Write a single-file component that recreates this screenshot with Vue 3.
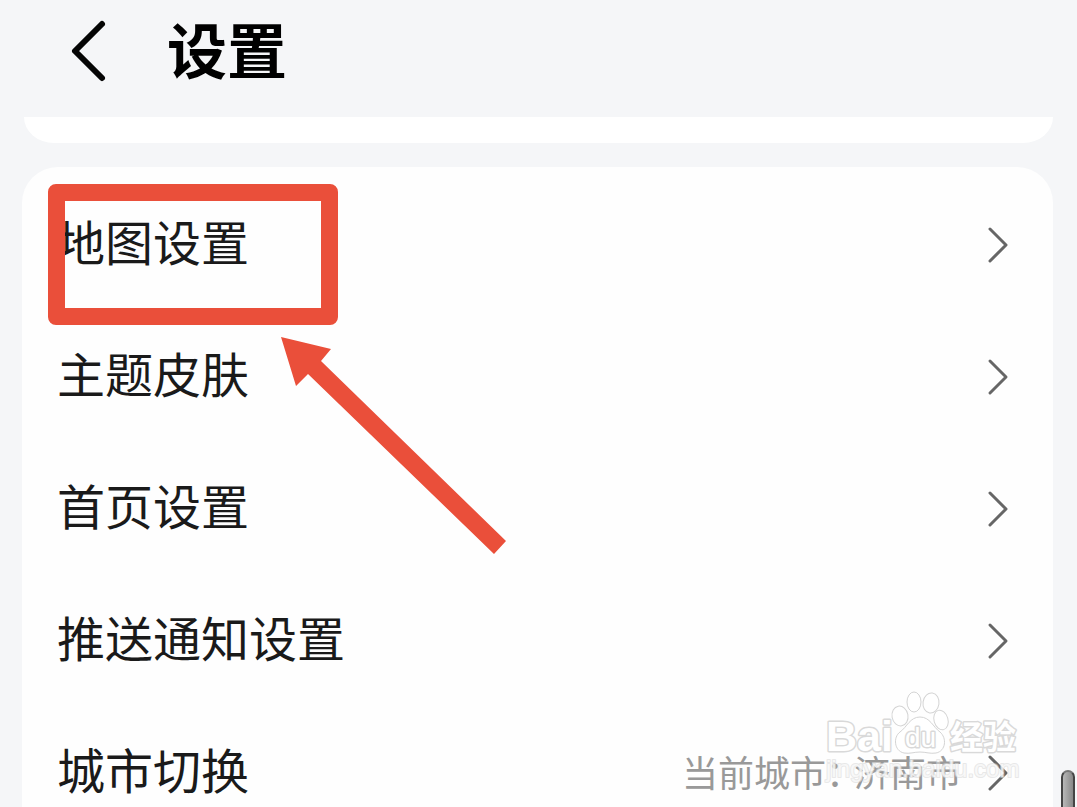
<script setup>
const rows = [
  { label: '地图设置' },
  { label: '主题皮肤' },
  { label: '首页设置' },
  { label: '推送通知设置' },
  { label: '城市切换', note: '当前城市：', value: '济南市' },
]
</script>

<template>
  <main class="page">
    <header class="bar">
      <button class="back" type="button" aria-label="返回">
        <svg width="40" height="64" viewBox="0 0 40 64" aria-hidden="true">
          <path d="M33 5 L6 32 L33 59" />
        </svg>
      </button>
      <h1>设置</h1>
    </header>

    <div class="previous"></div>

    <section class="card">
      <button v-for="row in rows" :key="row.label" class="row" type="button">
        <span class="label">{{ row.label }}</span>
        <span v-if="row.value" class="value">
          <span class="note">{{ row.note }}</span><span>{{ row.value }}</span>
        </span>
        <svg class="chevron" width="24" height="40" viewBox="0 0 24 40" aria-hidden="true">
          <path d="M4 4 L20 20 L4 36" />
        </svg>
      </button>

      <div class="frame"></div>
      <svg class="arrow" width="226" height="218" viewBox="0 0 226 218" aria-hidden="true">
        <path d="M0 0 L50 12 L40 24 L225 204 L213 217 L27 37 L15 49 Z" />
      </svg>
    </section>

    <svg class="watermark" width="200" height="100" viewBox="0 0 200 100" aria-hidden="true">
      <text class="brand" x="3" y="62" font-size="43">Bai</text>
      <g class="paw">
        <ellipse cx="77" cy="27" rx="8" ry="10" transform="rotate(-10 77 27)" />
        <ellipse cx="91" cy="13" rx="7" ry="10" />
        <ellipse cx="108" cy="14" rx="8" ry="10" transform="rotate(8 108 14)" />
        <ellipse cx="118" cy="31" rx="7" ry="10" transform="rotate(-16 118 31)" />
        <path d="M97 28 C87 28 84 38 77 43 C70 48 71 62 81 64 C87 65 91 63 97 63 C103 63 107 65 113 64 C123 62 124 49 117 43 C110 38 107 28 97 28 Z" />
      </g>
      <text class="brand thin" x="82" y="58" font-size="28">du</text>
      <text class="brand cjk" x="127" y="60" font-size="33">经验</text>
      <text class="site" x="3" y="88" font-size="24">jingyan.baidu.com</text>
    </svg>

    <div class="thumb"></div>
  </main>
</template>

<style>
html,
body {
  background: #f5f6f8;
}
</style>

<style scoped>
.page {
  position: relative;
  height: 100vh;
  overflow: hidden;
  background: #f5f6f8;
  font-family: "Noto Sans CJK SC", sans-serif;
}

button {
  margin: 0;
  padding: 0;
  border: 0;
  background: none;
  font: inherit;
  color: inherit;
  cursor: pointer;
}

.bar {
  display: flex;
  align-items: center;
  gap: 58px;
  height: 101px;
  padding: 0 70px 0 69px;
  margin-bottom: 16px;
}

.back {
  display: flex;
}

.back path {
  fill: none;
  stroke: #050505;
  stroke-width: 6;
  stroke-linecap: round;
  stroke-linejoin: round;
}

h1 {
  margin: 0;
  padding-bottom: 6px;
  font-size: 60px;
  line-height: 80px;
  font-weight: 700;
  color: #000;
}

.previous {
  height: 26px;
  margin: 0 24px;
  border-radius: 0 0 30px 30px / 0 0 26px 26px;
  background: #fff;
}

.card {
  position: relative;
  margin: 24px 24px 0 22px;
  padding-top: 12px;
  border-radius: 36px 36px 0 0;
  background: #fefefe;
}

.row {
  display: flex;
  align-items: center;
  width: 100%;
  height: 132px;
  padding: 0 43px 0 35px;
  text-align: left;
}

.label {
  flex: 1;
  padding-bottom: 10px;
  font-size: 48px;
  line-height: 64px;
  color: #1a1a1a;
}

.value {
  display: flex;
  margin-right: 24px;
  padding-bottom: 4px;
  font-size: 36px;
  line-height: 48px;
  color: #999;
}

.note {
  margin-right: -8px;
}

.chevron path {
  fill: none;
  stroke: #666;
  stroke-width: 3;
  stroke-linecap: round;
  stroke-linejoin: round;
}

.frame {
  position: absolute;
  left: 26px;
  top: 17px;
  box-sizing: border-box;
  width: 290px;
  height: 141px;
  border: 17px solid #ea4f3a;
  border-radius: 8px;
}

.arrow {
  position: absolute;
  left: 259px;
  top: 170px;
  fill: #ea4f3a;
}

.watermark {
  position: absolute;
  right: 54px;
  bottom: 18px;
}

.brand,
.site {
  fill: #fff;
  stroke: #d9d9d9;
  stroke-width: 3;
  stroke-linejoin: round;
  paint-order: stroke;
  font-family: "Liberation Sans", sans-serif;
  font-weight: 700;
}

.thin {
  font-weight: 400;
}

.cjk {
  font-family: "Noto Sans CJK SC", sans-serif;
}

.site {
  font-weight: 400;
  stroke-width: 2;
  stroke-opacity: 0.6;
  fill-opacity: 0.7;
}

.paw {
  fill: #fff;
  stroke: #d4d4d4;
  stroke-width: 1;
}

.thumb {
  position: absolute;
  right: 2px;
  bottom: 0;
  box-sizing: border-box;
  width: 14px;
  height: 37px;
  border: 2px solid #444;
  border-top-color: #777;
  border-bottom: 0;
  border-radius: 7px 7px 0 0;
  background: linear-gradient(to right, #b8b8b8, #888);
}
</style>
